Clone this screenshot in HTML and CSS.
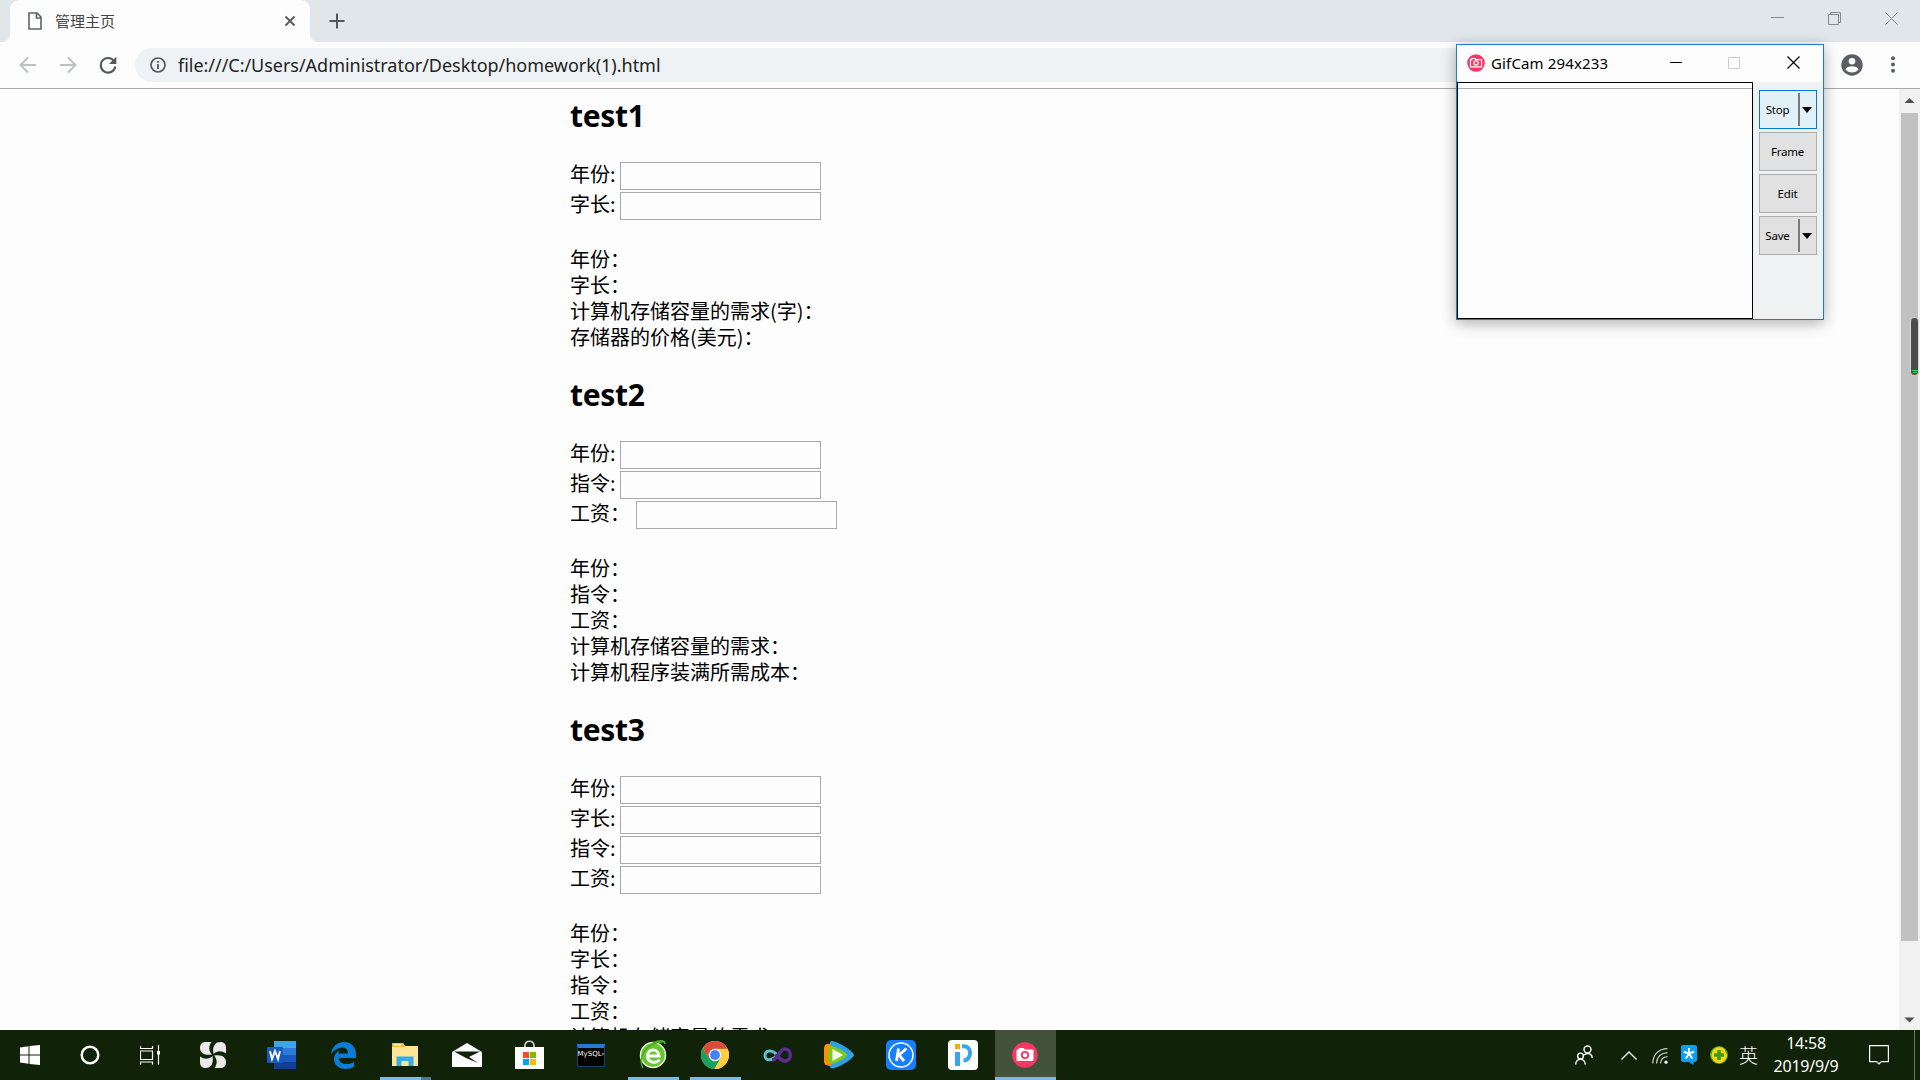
FILE: index.html
```html
<!DOCTYPE html>
<html lang="zh-CN">
<head>
<meta charset="utf-8">
<title>管理主页</title>
<link rel="stylesheet" href="styles.css">
</head>
<body>
<div class="screen">
  <header class="tabstrip">
    <div class="tab">
      <svg class="doc-icon" width="14" height="18" viewBox="0 0 14 18"><path d="M1 1h8l4 4v12H1zM8.500 1v5H13" fill="none" stroke="#5f6368" stroke-width="1.600"/></svg>
      <span class="tab-title">管理主页</span>
      <svg width="12" height="12" viewBox="0 0 12 12"><path d="M1.500 1.500l9 9M10.500 1.500l-9 9" stroke="#54585c" stroke-width="1.800"/></svg>
    </div>
    <svg class="new-tab" width="16" height="16" viewBox="0 0 16 16"><path d="M8 0.500v15M0.500 8h15" stroke="#54585c" stroke-width="2"/></svg>
    <div class="window-controls">
      <svg width="13" height="13" viewBox="0 0 13 13"><path d="M0 6h13" stroke="#888" transform="translate(0 -.5)"/></svg>
      <svg width="13" height="13" viewBox="0 0 13 13"><path d="M.5 2.500h10v10H.5zM2.500 2.500v-2h10v10h-2" fill="none" stroke="#888"/></svg>
      <svg width="13" height="13" viewBox="0 0 13 13"><path d="M.5.5l12 12M12.500.5l-12 12" stroke="#888"/></svg>
    </div>
  </header>
  <nav class="toolbar">
    <svg width="18" height="18" viewBox="0 0 18 18"><path d="M17 9H2M9 1.500L1.500 9 9 16.500" fill="none" stroke="#bcbec0" stroke-width="1.900"/></svg>
    <svg width="18" height="18" viewBox="0 0 18 18"><path d="M1 9h15M9 1.500L16.500 9 9 16.500" fill="none" stroke="#bcbec0" stroke-width="1.900"/></svg>
    <svg width="18" height="18" viewBox="0 0 18 18"><path d="M15 5A7.300 7.300 0 1 0 16.300 10.500" fill="none" stroke="#54585c" stroke-width="2.100"/><path d="M17.300.8V8h-7.200z" fill="#54585c"/></svg>
    <div class="omnibox">
      <svg width="16" height="16" viewBox="0 0 16 16"><circle cx="8" cy="8" r="7" fill="none" stroke="#54585c" stroke-width="1.700"/><path d="M8 7v5M8 4v1.800" stroke="#54585c" stroke-width="1.800"/></svg>
      <span class="url">file:///C:/Users/Administrator/Desktop/homework(1).html</span>
    </div>
    <svg class="account" width="22" height="22" viewBox="0 0 22 22"><circle cx="11" cy="11" r="10.700" fill="#5a5e63"/><circle cx="11" cy="7.300" r="3.300" fill="#fff"/><path d="M4.500 15.500c1.500-4.300 11.500-4.300 13 0-2.800 4-10.200 4-13 0z" fill="#fff"/></svg>
    <svg class="menu-dots" width="4" height="17" viewBox="0 0 4 17"><g fill="#5a5e63"><circle cx="2" cy="2.200" r="2"/><circle cx="2" cy="8.500" r="2"/><circle cx="2" cy="14.800" r="2"/></g></svg>
  </nav>
  <main class="viewport">
    <div class="page">
      <section class="test">
        <h2>test1</h2>
        <div class="field"><label>年份:</label><input type="text"></div>
        <div class="field"><label>字长:</label><input type="text"></div>
        <div class="results">
          <p>年份：</p><p>字长：</p><p>计算机存储容量的需求(字)：</p><p>存储器的价格(美元)：</p>
        </div>
      </section>
      <section class="test">
        <h2>test2</h2>
        <div class="field"><label>年份:</label><input type="text"></div>
        <div class="field"><label>指令:</label><input type="text"></div>
        <div class="field wide"><label>工资：</label><input type="text"></div>
        <div class="results">
          <p>年份：</p><p>指令：</p><p>工资：</p><p>计算机存储容量的需求：</p><p>计算机程序装满所需成本：</p>
        </div>
      </section>
      <section class="test">
        <h2>test3</h2>
        <div class="field"><label>年份:</label><input type="text"></div>
        <div class="field"><label>字长:</label><input type="text"></div>
        <div class="field"><label>指令:</label><input type="text"></div>
        <div class="field"><label>工资:</label><input type="text"></div>
        <div class="results">
          <p>年份：</p><p>字长：</p><p>指令：</p><p>工资：</p><p>计算机存储容量的需求：</p>
        </div>
      </section>
    </div>
    <div class="scrollbar">
      <svg width="21" height="24" viewBox="0 0 21 24"><path d="M5.500 14l5-5 5 5z" fill="#505050"/></svg>
      <div class="thumb"></div>
      <svg width="21" height="24" viewBox="0 0 21 24"><path d="M5.500 11.500l5 5 5-5z" fill="#505050"/></svg>
    </div>
  </main>
  <footer class="taskbar">
    <div class="cell sys"><svg width="20" height="20" viewBox="0 0 20 20"><path d="M0 2.500L8.500 1.300v8.200H0zM9.500 1.100L20 0v9.500H9.500zM0 10.500h8.500v8.200L0 17.500zM9.500 10.500H20V20L9.500 18.900z" fill="#fff"/></svg></div>
    <div class="cell sys"><svg width="20" height="20" viewBox="0 0 20 20"><circle cx="10" cy="10" r="8.300" fill="none" stroke="#fff" stroke-width="2.500"/></svg></div>
    <div class="cell sys"><svg width="20" height="20" viewBox="0 0 20 20"><path d="M.5 1v2.500h12V1M.5 19.500V17h12v2.500M.5 6h12v8.500H.5zM18.500 0v19.500" fill="none" stroke="#fff" stroke-width="1.200"/><rect x="17" y="6" width="3" height="3.500" fill="#fff"/></svg></div>
    <div class="cell pinwheel"><svg width="26" height="26" viewBox="0 0 26 26"><g fill="#e9e9e9"><path d="M12 12.500C3 14 0 10 0 6 0 2 2 0 6 0h5.500C8 5 9 9 12 12.500z"/><path d="M13.500 12C12 3 16 0 20 0c4 0 6 2 6 6v5.500C21 8 17 9 13.500 12z"/><path d="M14 13.500C23 12 26 16 26 20c0 4-2 6-6 6h-5.500C18 21 17 17 14 13.500z"/><path d="M12.500 14C14 23 10 26 6 26c-4 0-6-2-6-6v-5.500C5 18 9 17 12.500 14z"/></g></svg></div>
    <div class="cell"><svg class="word" width="29" height="28" viewBox="0 0 29 28"><rect x="7" width="22" height="28" rx="1" fill="#185abd"/><path d="M7 0h22v8H7z" fill="#41a5ee"/><path d="M7 7h22v7H7z" fill="#2b7cd3"/><path d="M7 21h22v7H7z" fill="#103f91"/><rect y="6" width="16" height="16" rx="1" fill="#185abd"/><path d="M3 10l2 8 3-8 3 8 2-8" fill="none" stroke="#fff" stroke-width="1.900"/></svg></div>
    <div class="cell"><svg width="25" height="27" viewBox="0 0 25 27"><path d="M0 12C1 4 7 0 13 0c8 0 12 6 12 12v4H8c.4 7 9 7.500 15 4v5C12 30 3 25 3 17c0-4 2-7 6-9-1 1-1.500 2-1.500 3.500H17C17 3 6 4 0 12z" fill="#0c7cd9"/></svg></div>
    <div class="cell running explorer"><svg width="28" height="24" viewBox="0 0 28 24"><path d="M1 0h11l2 3h13v20H1z" fill="#ffe594"/><path d="M1 0h11l2 4H1z" fill="#f9bd35"/><path d="M3 1h7v1.500H3z" fill="#fff3c4"/><path d="M5.500 23V13.500h17V23h-5v-5h-7v5z" fill="#35aee5"/></svg></div>
    <div class="cell"><svg width="30" height="24" viewBox="0 0 30 24"><path d="M0 9L15 0l15 9v15H0z" fill="#fff"/><path d="M2 8.500h26L17 14l9 6-12-5z" fill="#102207"/></svg></div>
    <div class="cell"><svg width="29" height="30" viewBox="0 0 29 30"><path d="M10 9V5c1-5 8-5 9 0v4" fill="none" stroke="#ccc" stroke-width="1.700"/><path d="M0 7h29v22H0z" fill="#fff"/><path d="M8 12h6v6H8z" fill="#f25022"/><path d="M15 12h6v6h-6z" fill="#7fba00"/><path d="M8 19h6v6H8z" fill="#00a4ef"/><path d="M15 19h6v6h-6z" fill="#ffb900"/></svg></div>
    <div class="cell"><div class="mysql"><span>MySQL›</span></div></div>
    <div class="cell running"><svg width="28" height="30" viewBox="0 0 28 30"><circle cx="14" cy="15" r="12.500" fill="#68c62e" stroke="#e9f7df" stroke-width="1.500"/><path d="M20.500 19.500c-3 4.500-12 3.500-12-3.500 0-8 11-8 11.500 0h-11" fill="none" stroke="#fff" stroke-width="2.900"/><path d="M4 28C-2 18 8 1 25 2M14 3c6-3 12-3 12 1" fill="none" stroke="#4ba91f" stroke-width="1.600"/></svg></div>
    <div class="cell running"><svg width="28" height="28" viewBox="0 0 28 28"><circle cx="14" cy="14" r="14" fill="#ffcd40"/><path d="M26.500 7.700H14L8 17.500 1.900 7A14 14 0 0 0 13.500 28l6-10.800z" fill="#18a05e"/><path d="M14 7.700h12.500A14 14 0 0 1 13.500 28l6-10.800z" fill="#ffcd40"/><path d="M1.900 7A14 14 0 0 1 26.500 7.700H14L8 17.500z" fill="#d94c3d"/><circle cx="14" cy="14" r="6.300" fill="#f1f1f1"/><circle cx="14" cy="14" r="4.900" fill="#4284f3"/></svg></div>
    <div class="cell"><svg class="vs" width="29" height="16" viewBox="0 0 29 16"><path d="M14 8.500C11 3 2 2 2 8.500s8 5 12 0" fill="none" stroke="#66bccc" stroke-width="3"/><path d="M9 13C15 13 16 2 22 2c7 0 7 12 0 12-4 0-6-3-9-7" fill="none" stroke="#5c2d91" stroke-width="3.500"/></svg></div>
    <div class="cell"><svg width="30" height="28" viewBox="0 0 30 28"><path d="M7 0c4-1 23 10 23 14S11 29 7 27 4 2 7 0z" fill="#319fe7"/><path d="M1 4c4-3 8-1 8 10s-3 12-7 10S-1 7 1 4z" fill="#ff8c0a"/><path d="M6 5c3-1 17 6 17 9S9 24 6 23 4 7 6 5z" fill="#7dcc16"/><path d="M8.500 8v12L19 14z" fill="#fff"/></svg></div>
    <div class="cell"><svg width="30" height="30" viewBox="0 0 30 30"><rect width="30" height="30" rx="5" fill="#177eff"/><circle cx="15" cy="15" r="12" fill="none" stroke="#fff" stroke-width="1.500"/><path d="M12.500 8.500L10.500 21M20.500 8.500L13 15l5 6" fill="none" stroke="#fff" stroke-width="2.800"/></svg></div>
    <div class="cell"><svg width="30" height="30" viewBox="0 0 30 30"><rect width="30" height="30" rx="4" fill="#fff"/><path d="M7 4h5v5H7z" fill="#f5a623"/><path d="M7 12h5v14H7z" fill="#38a6ef"/><path d="M14 6.500c11-2 10 14 1.500 14" fill="none" stroke="#38a6ef" stroke-width="4"/></svg></div>
    <div class="cell running active"><svg width="26" height="26" viewBox="0 0 26 26"><circle cx="13" cy="13" r="12.700" fill="#fb3665"/><path d="M5 8h2V6.500h5V8h9v10.500H5z" fill="#fff" stroke="#fff" stroke-linejoin="round"/><circle cx="13" cy="13" r="3.200" fill="#fff" stroke="#fb3665" stroke-width="1.800"/></svg></div>
    <div class="tray">
      <svg class="people" width="18" height="20" viewBox="0 0 18 20"><g fill="none" stroke="#fff" stroke-width="1.400"><circle cx="12.500" cy="4.500" r="3.500"/><circle cx="5.500" cy="11" r="2.900"/><path d="M.7 19.500c0-7 9.500-7 9.500 0M9 10c4-3 8-1 8.300 3"/></g></svg>
      <svg class="chevron" width="16" height="9" viewBox="0 0 16 9"><path d="M.5 8.500L8 1l7.500 7.500" fill="none" stroke="#fff" stroke-width="1.300"/></svg>
      <svg class="wifi" width="16" height="16" viewBox="0 0 16 16"><g fill="none" stroke="#c8cdc6" stroke-width="1.200"><path d="M.7 15.500C1 6 7 1 15.500.7M4.500 15.500C5 9 9 5 15.500 4.700M8.500 15.500c.3-4 3-6.500 7-6.800"/></g><circle cx="14" cy="14.200" r="1.600" fill="#fff"/></svg>
      <svg class="star" width="16" height="20" viewBox="0 0 16 20"><path d="M2 0h12q2 0 2 2v13q0 2-2 2h-1.500v3L8 17H2q-2 0-2-2V2q0-2 2-2z" fill="#0a9ffb"/><path d="M8 3v5.500M2.800 6.800L8 8.500M13.200 6.800L8 8.500M4.800 13.500L8 8.500M11.200 13.500L8 8.500" stroke="#fff" stroke-width="2"/></svg>
      <svg class="shield" width="18" height="18" viewBox="0 0 18 18"><circle cx="9" cy="9" r="9" fill="#4ba81a"/><path d="M2 12A8 8 0 0 1 14 2.500L17 9A8 8 0 0 1 5 16z" fill="#f8d414"/><path d="M9 4v10M4 9h10" stroke="#3c9912" stroke-width="3.600"/></svg>
      <span class="ime">英</span>
      <div class="clock"><span>14:58</span><span>2019/9/9</span></div>
      <svg class="notice" width="20" height="20" viewBox="0 0 20 20"><path d="M.6.600h18.800v16h-7L10 19l-2.400-2.400h-7z" fill="none" stroke="#fff" stroke-width="1.200"/></svg>
    </div>
  </footer>

  <aside class="gifcam">
    <div class="gifcam-title">
      <svg width="18" height="18" viewBox="0 0 26 26"><circle cx="13" cy="13" r="12.700" fill="#fb3665"/><path d="M5 8h2V6.500h5V8h9v10.500H5z" fill="none" stroke="#fff" stroke-width="1.700"/><circle cx="13" cy="13" r="3" fill="none" stroke="#fff" stroke-width="1.800"/></svg>
      <span>GifCam 294x233</span>
      <svg class="gc-min" width="12" height="12" viewBox="0 0 12 12"><path d="M0 5.500h12" stroke="#000"/></svg>
      <svg class="gc-max" width="12" height="12" viewBox="0 0 12 12"><path d="M.5.500h11v11H.5z" fill="none" stroke="#ccc"/></svg>
      <svg class="gc-close" width="13" height="13" viewBox="0 0 13 13"><path d="M.5.500l12 12M12.500.500l-12 12" stroke="#000" stroke-width="1.200"/></svg>
    </div>
    <div class="gifcam-body">
      <div class="capture"></div>
      <div class="actions">
        <div class="btn split focus"><span>Stop</span><i></i><svg width="10" height="6" viewBox="0 0 10 6"><path d="M0 0h10L5 6z"/></svg></div>
        <div class="btn"><span>Frame</span></div>
        <div class="btn"><span>Edit</span></div>
        <div class="btn split"><span>Save</span><i></i><svg width="10" height="6" viewBox="0 0 10 6"><path d="M0 0h10L5 6z"/></svg></div>
      </div>
    </div>
  </aside>
  <div class="meter"></div>
</div>
</body>
</html>
```
FILE: styles.css
```css
* { box-sizing: border-box; }
body { margin: 0; font-family: "Noto Sans", "Noto Sans CJK SC", sans-serif; color: #000; }
svg { display: block; flex: none; }
.screen { position: relative; width: 1920px; height: 1080px; overflow: hidden; display: flex; flex-direction: column; background: #fdfdfd; }

.tabstrip { height: 42px; flex: none; display: flex; background: #e1e6ea; padding-left: 10px; }
.tab { position: relative; width: 300px; display: flex; align-items: center; background: #fdfdfd; border-radius: 9px 9px 0 0; padding: 0 14px 0 18px; }
.tab::before, .tab::after { content: ""; position: absolute; bottom: 0; width: 9px; height: 9px; }
.tab::before { left: -9px; background: radial-gradient(circle at 0 0, transparent 9px, #fdfdfd 9.500px); }
.tab::after { right: -9px; background: radial-gradient(circle at 100% 0, transparent 9px, #fdfdfd 9.500px); }
.tab-title { flex: 1; margin-left: 13px; font: 400 15px/22px "Noto Sans CJK SC", sans-serif; color: #444; }
.new-tab { margin: 13px 0 0 19px; }
.window-controls { display: flex; gap: 44px; margin: 12px 22px 0 auto; }

.toolbar { height: 47px; flex: none; display: flex; align-items: center; padding: 0 25px 1px 19px; gap: 22px; border-bottom: 1px solid #aba7a8; }
.omnibox { flex: 1; height: 34px; margin: 0 -3px 0 -4px; display: flex; align-items: center; background: #eff2f4; border-radius: 17px; padding-left: 15px; }
.url { margin-left: 12px; font-size: 18px; line-height: 24px; color: #222; white-space: nowrap; letter-spacing: -0.030px; }
.menu-dots { margin-left: 6px; }

.viewport { height: 941px; flex: none; display: flex; justify-content: space-between; overflow: hidden; }
.page { padding-left: 570px; }
.test { padding-bottom: 18px; }
h2 { margin: 0; height: 72px; padding-top: 7px; font: 700 30px/40px "Noto Sans", sans-serif; letter-spacing: -0.300px; }
.field { height: 30px; display: flex; align-items: center; font: 400 20px/26px "Noto Sans CJK SC", sans-serif; }
.field label { width: 50px; padding-bottom: 4px; white-space: nowrap; }
.field.wide label { width: 66px; }
.field input { width: 201px; height: 28px; margin: 0; padding: 1px; border: 1px solid #a9a9a9; background: #fdfdfd; }
.results { padding-top: 25px; font: 400 20px/26px "Noto Sans CJK SC", sans-serif; }
.results p { margin: 0; }

.scrollbar { width: 21px; display: flex; flex-direction: column; background: #f1f1f2; }
.thumb { height: 828px; margin: 0 2px; background: #c1c1c1; }
.scrollbar svg:last-child { margin-top: auto; }

.taskbar { height: 50px; flex: none; display: flex; background: #102207; color: #fff; }
.cell { width: 62px; height: 50px; flex: none; display: flex; align-items: center; justify-content: center; padding-right: 2px; }
.cell.sys { width: 60px; padding-right: 0; }
.cell.pinwheel { width: 71px; padding-right: 5px; }
.cell.running { background: linear-gradient(#76b9ed, #76b9ed) 5px 47px / 51px 3px no-repeat; }
.cell.explorer { background: linear-gradient(90deg, #76b9ed 41px, #4b799e 41px) 5px 47px / 51px 3px no-repeat; }
.cell.active { background: linear-gradient(#76b9ed, #76b9ed) 0 47px / 61px 3px no-repeat, #43533b; width: 61px; padding-right: 1px; }
.mysql { width: 28px; height: 23px; background: #000; border: 1px solid #1c3f70; border-top: 4px solid #2678d6; display: flex; justify-content: center; }
.mysql span { font: 7px/12px "DejaVu Sans", sans-serif; color: #fff; }
.tray { flex: 1; display: flex; align-items: center; margin-right: 5px; border-right: 1px solid #6b7766; }
.people { margin-left: auto; }
.chevron { margin-left: 28px; }
.wifi { margin-left: 15px; margin-top: 2px; }
.star { margin-left: 13px; }
.shield { margin-left: 13px; }
.ime { margin-left: 11px; font: 300 19px/24px "Noto Sans CJK SC", sans-serif; }
.clock { width: 80px; margin-left: 8px; display: flex; flex-direction: column; align-items: center; font-size: 16px; line-height: 23px; letter-spacing: -0.250px; }
.notice { margin: 0 25px 0 23px; }

.gifcam { position: absolute; left: 1456px; top: 44px; width: 368px; height: 276px; display: flex; flex-direction: column; border: 1px solid #1a7dd0; background: #fdfdfd; box-shadow: 0 3px 14px rgba(0, 0, 0, .32); }
.gifcam-title { height: 37px; display: flex; align-items: center; padding: 0 0 2px 10px; font-size: 15px; }
.gifcam-title span { width: 184px; margin-left: 6px; white-space: nowrap; letter-spacing: 0.150px; }
.gc-min { margin-left: -5px; }
.gc-max { margin-left: 46px; }
.gc-close { margin-left: 47px; }
.gifcam-body { flex: 1; display: flex; background: #eff1f2; }
.capture { width: 296px; border: 1px solid #000; background: linear-gradient(#aba7a8, #aba7a8) 0 5px / 100% 1px no-repeat #fdfdfd; }
.actions { padding: 8px 0 0 6px; display: flex; flex-direction: column; gap: 3px; }
.btn { width: 58px; height: 39px; display: flex; align-items: center; justify-content: center; padding-right: 1px; border: 1px solid #adadad; background: #e1e1e1; font: 11.500px/14px "Noto Sans", sans-serif; letter-spacing: -0.200px; }
.btn.split { justify-content: flex-start; padding: 0; }
.btn.split span { width: 35px; text-align: center; }
.btn.split i { width: 2px; height: 33px; margin: 0 2px 0 3px; background: #7a7a7a; }
.btn.focus { border-color: #0078d7; background: #e2f1f8; }
.meter { position: absolute; left: 1910px; top: 317px; width: 9px; height: 59px; border-radius: 4px; border: 1px solid #d8d8d8; background: linear-gradient(#34d66a, #34d66a) 50% 52px / 6px 1px no-repeat, linear-gradient(#34d66a, #34d66a) 50% 54px / 4px 1px no-repeat, #4b4b4b; }
```
